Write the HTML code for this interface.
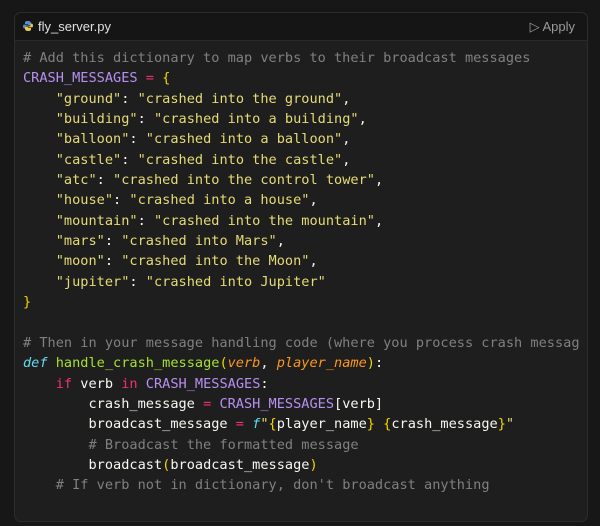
<!DOCTYPE html>
<html><head><style>
body{margin:0;width:600px;height:526px;background:#171717;overflow:hidden;font-family:"Liberation Sans",sans-serif}
.card{position:absolute;left:14px;top:12px;width:572px;height:508px;background:#1e1e1e;border:1px solid #2c2c2c;border-radius:7px;overflow:hidden}
.hd{height:27px;background:#151515;border-bottom:1px solid #2a2a2a;position:relative;color:#e0e0e0;font-size:13px}
.hd .t{position:absolute;left:23px;top:6px}
.hd .a{position:absolute;right:12px;top:6px;color:#9a9a9a}
pre{margin:0;position:absolute;left:8px;top:35px;font-family:"DejaVu Sans Mono",monospace;font-size:13.6px;line-height:20.35px;color:#f8f8f2}
.c{color:#808080}.p{color:#b88ff2}.k{color:#f0306c}.s{color:#e6db74}.b{color:#f5d400}.d{color:#66d9ef;font-style:italic}.f{color:#a6e22e}.o{color:#fd971f;font-style:italic}
</style></head><body>
<div class="card">
<div class="hd"><svg style="position:absolute;left:8px;top:8px" width="10" height="10" viewBox="0 0 10 10"><path d="M5 0C2 0 2 1 2 2v1h3v.6H1C0 3.6 0 5 0 5.5 0 7 1 7.5 1.5 7.5H2.5V6c0-1 1-1.5 2-1.5h2c1 0 1.5-.5 1.5-1.5V2C8 1 7 0 5 0z" fill="#5b8fc9"/><path d="M5 10c3 0 3-1 3-2V7H5v-.6h4C10 6.4 10 5 10 4.5 10 3 9 2.5 8.5 2.5H7.5V4c0 1-1 1.5-2 1.5h-2C2.5 5.5 2 6 2 7v1c0 1 1 2 3 2z" fill="#e7c84a"/></svg><span class="t">fly_server.py</span><span class="a">▷ Apply</span></div>
<pre><span class="c"># Add this dictionary to map verbs to their broadcast messages</span>
<span class="p">CRASH_MESSAGES</span> <span class="k">=</span> <span class="b">{</span>
    <span class="s">"ground"</span>: <span class="s">"crashed into the ground"</span>,
    <span class="s">"building"</span>: <span class="s">"crashed into a building"</span>,
    <span class="s">"balloon"</span>: <span class="s">"crashed into a balloon"</span>,
    <span class="s">"castle"</span>: <span class="s">"crashed into the castle"</span>,
    <span class="s">"atc"</span>: <span class="s">"crashed into the control tower"</span>,
    <span class="s">"house"</span>: <span class="s">"crashed into a house"</span>,
    <span class="s">"mountain"</span>: <span class="s">"crashed into the mountain"</span>,
    <span class="s">"mars"</span>: <span class="s">"crashed into Mars"</span>,
    <span class="s">"moon"</span>: <span class="s">"crashed into the Moon"</span>,
    <span class="s">"jupiter"</span>: <span class="s">"crashed into Jupiter"</span>
<span class="b">}</span>

<span class="c"># Then in your message handling code (where you process crash messag</span>
<span class="d">def</span> <span class="f">handle_crash_message</span><span class="b">(</span><span class="o">verb</span>, <span class="o">player_name</span><span class="b">)</span>:
    <span class="k">if</span> verb <span class="k">in</span> <span class="p">CRASH_MESSAGES</span>:
        crash_message <span class="k">=</span> <span class="p">CRASH_MESSAGES</span>[verb]
        broadcast_message <span class="k">=</span> <span class="d">f</span><span class="s">"</span><span class="b">{</span>player_name<span class="b">}</span> <span class="b">{</span>crash_message<span class="b">}</span><span class="s">"</span>
        <span class="c"># Broadcast the formatted message</span>
        broadcast<span class="b">(</span>broadcast_message<span class="b">)</span>
    <span class="c"># If verb not in dictionary, don't broadcast anything</span></pre>
</div>
</body></html>
